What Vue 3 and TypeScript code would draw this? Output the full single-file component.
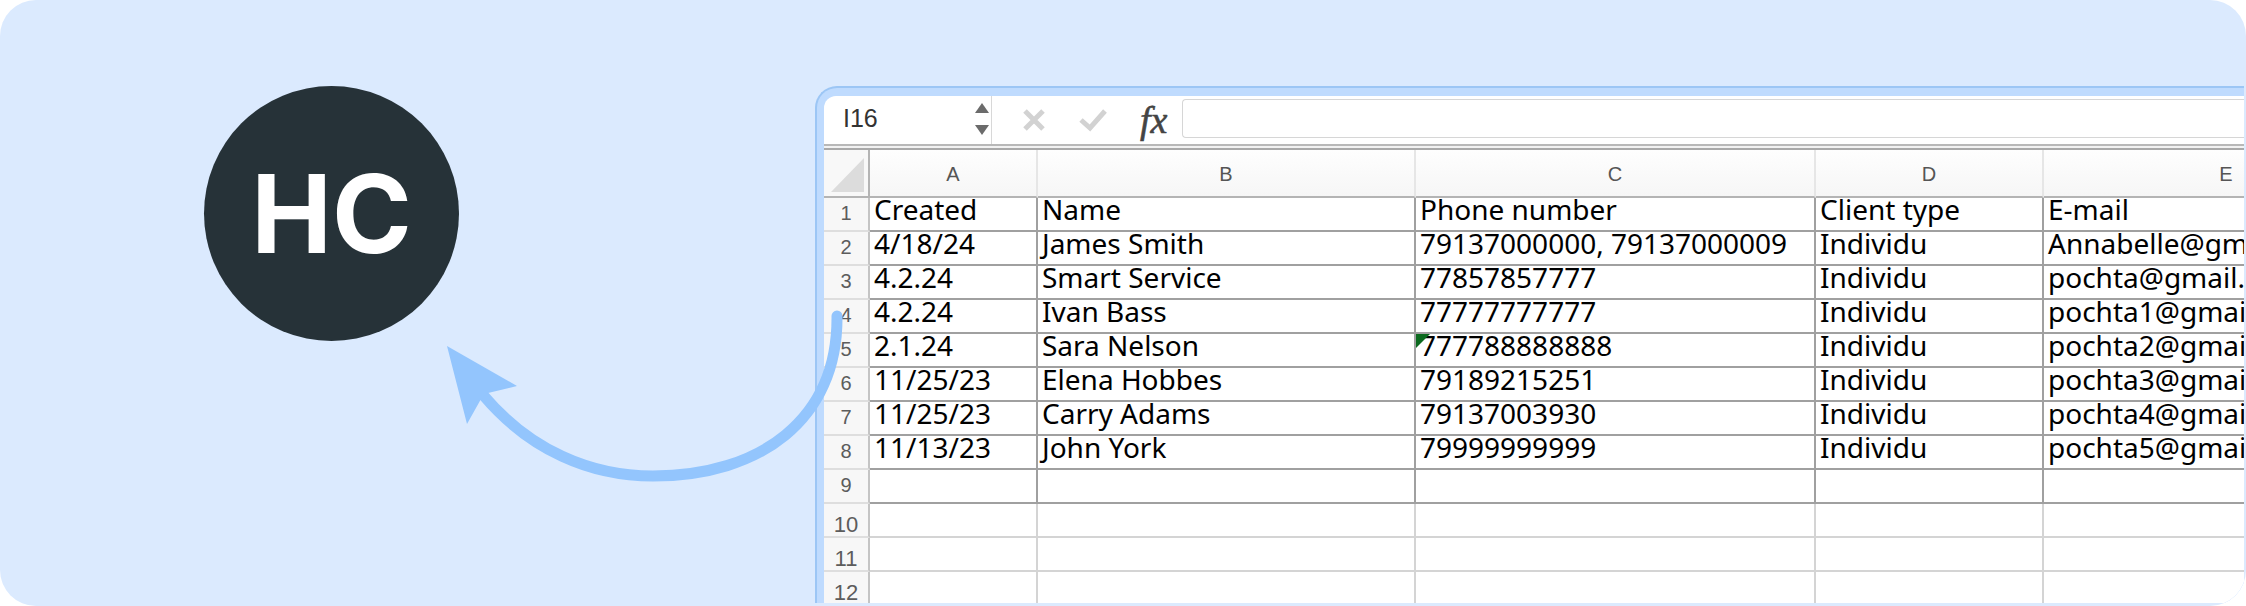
<script setup lang="ts">
const columns: string[] = ['A', 'B', 'C', 'D', 'E']
const rows: string[][] = [
  ['Created', 'Name', 'Phone number', 'Client type', 'E-mail'],
  ['4/18/24', 'James Smith', '79137000000, 79137000009', 'Individu', 'Annabelle@gmail.com'],
  ['4.2.24', 'Smart Service', '77857857777', 'Individu', 'pochta@gmail.com'],
  ['4.2.24', 'Ivan Bass', '77777777777', 'Individu', 'pochta1@gmail.com'],
  ['2.1.24', 'Sara Nelson', '777788888888', 'Individu', 'pochta2@gmail.com'],
  ['11/25/23', 'Elena Hobbes', '79189215251', 'Individu', 'pochta3@gmail.com'],
  ['11/25/23', 'Carry Adams', '79137003930', 'Individu', 'pochta4@gmail.com'],
  ['11/13/23', 'John York', '79999999999', 'Individu', 'pochta5@gmail.com'],
  ['', '', '', '', ''],
  ['', '', '', '', ''],
  ['', '', '', '', ''],
  ['', '', '', '', ''],
]
</script>

<template>
  <div class="card">
    <div class="logo"><span>HC</span></div>
    <div class="window">
      <div class="sheet">
        <div class="toolbar">
          <div class="namebox">
            <span class="cellref">I16</span>
            <div class="spinner"><i class="up"></i><i class="down"></i></div>
          </div>
          <svg class="tool-icon" width="24" height="24" viewBox="0 0 24 24">
            <path d="M3 3 L21 21 M21 3 L3 21" stroke="#d2d2d2" stroke-width="5" fill="none" />
          </svg>
          <svg class="tool-icon check" width="30" height="24" viewBox="0 0 30 24">
            <path d="M3 12 L12 20 L27 3" stroke="#d2d2d2" stroke-width="5" fill="none" />
          </svg>
          <span class="fx">fx</span>
          <div class="formula"></div>
        </div>
        <div class="rule"></div>
        <div class="grid">
          <div class="corner"><i></i></div>
          <div v-for="c in columns" :key="c" class="colhead">{{ c }}</div>
          <template v-for="(row, r) in rows" :key="r">
            <div class="rowhead" :class="{ wide: r >= 9 }">{{ r + 1 }}</div>
            <div
              v-for="(value, c) in row"
              :key="c"
              class="cell"
              :class="{ faint: r >= 9, flagged: r === 4 && c === 2 }"
            >{{ value }}</div>
          </template>
        </div>
      </div>
    </div>
    <svg class="arrow" width="2246" height="606" viewBox="0 0 2246 606">
      <path d="M837 316 C838 420 760 476 653 476 C590 476 530 450 484 396" fill="none" stroke="#93c5fd" stroke-width="11" stroke-linecap="round" />
      <path d="M447 346 L517 386 L488 393 L481 399 L467 424 Z" fill="#93c5fd" />
    </svg>
  </div>
</template>

<style>
html, body { margin: 0; background: #fff; }
</style>

<style scoped>
.card {
  position: relative;
  box-sizing: border-box;
  width: 2246px;
  height: 606px;
  padding: 86px 2px 3px 204px;
  display: flex;
  align-items: stretch;
  background: #dbeafe;
  border-radius: 36px;
  overflow: hidden;
}
.logo {
  flex: none;
  width: 255px;
  height: 255px;
  margin-right: 356px;
  border-radius: 50%;
  background: #263238;
  color: #fff;
  display: flex;
  align-items: center;
  justify-content: center;
  font: 700 108px/1 Inter, sans-serif;
}
.window {
  flex: 1;
  min-width: 0;
  box-sizing: border-box;
  border: 2px solid #9cc6f5;
  border-right: 0;
  border-bottom: 0;
  border-top-left-radius: 22px;
  padding: 8px 0 0 7px;
  background: #bfdbfe;
  overflow: hidden;
}
.sheet {
  height: 100%;
  background: #fff;
  border-top-left-radius: 12px;
  overflow: hidden;
}
.toolbar {
  height: 48px;
  display: flex;
  align-items: center;
}
.namebox {
  flex: none;
  box-sizing: border-box;
  width: 168px;
  height: 48px;
  padding: 0 1px 4px 19px;
  border-right: 1px solid #d8d8d8;
  display: flex;
  align-items: center;
  justify-content: space-between;
}
.cellref {
  font: 25px/1 "Liberation Sans", sans-serif;
  color: #333;
}
.spinner {
  display: flex;
  flex-direction: column;
  gap: 12px;
  padding: 2px 1px 0 0;
}
.spinner i {
  display: block;
  width: 0;
  height: 0;
  border-left: 7px solid transparent;
  border-right: 7px solid transparent;
}
.spinner .up { border-bottom: 10px solid #6b6b6b; }
.spinner .down { border-top: 10px solid #6b6b6b; }
.tool-icon {
  flex: none;
  margin-left: 30px;
}
.tool-icon.check {
  margin-left: 32px;
}
.fx {
  flex: none;
  margin-left: 32px;
  font: italic 400 38px/1 "Liberation Serif", serif;
  -webkit-text-stroke: 0.6px #444;
  color: #444;
}
.formula {
  flex: 1;
  height: 39px;
  margin: 0 0 3px 15px;
  box-sizing: border-box;
  border: 1px solid #d6d6d6;
  border-right: 0;
  border-radius: 4px 0 0 4px;
}
.rule {
  height: 2px;
  box-sizing: content-box;
  background: #b8b8b8;
  border-bottom: 2px solid #f2f2f2;
  box-shadow: 0 4px 0 #a9a9a9;
  margin-bottom: 2px;
}
.grid {
  display: grid;
  grid-template-columns: 46px 168px 378px 400px 228px 366px;
  grid-template-rows: 48px repeat(12, 34px);
}
.corner {
  box-sizing: border-box;
  border-right: 2px solid #b4b4b4;
  border-bottom: 2px solid #b4b4b4;
  padding: 8px 5px 0 7px;
  background: #f8f8f8;
}
.corner i {
  display: block;
  width: 33px;
  height: 34px;
  background: #dcdcdc;
  clip-path: polygon(100% 0, 100% 100%, 0 100%);
}
.colhead {
  box-sizing: border-box;
  border-right: 2px solid #e6e6e6;
  border-bottom: 2px solid #b4b4b4;
  background: linear-gradient(#fefefe, #f6f6f6);
  font: 20px/49px "Liberation Sans", sans-serif;
  text-align: center;
  color: #555;
}
.rowhead {
  box-sizing: border-box;
  border-right: 2px solid #c4c4c4;
  border-bottom: 2px solid #dedede;
  background: #f7f7f7;
  font: 20px/31px "Liberation Sans", sans-serif;
  text-align: center;
  color: #5c5c5c;
}
.rowhead.wide {
  font-size: 22px;
  line-height: 41px;
}
.cell {
  position: relative;
  box-sizing: border-box;
  min-width: 0;
  border-right: 2px solid #a0a0a0;
  border-bottom: 2px solid #a0a0a0;
  padding-left: 4px;
  font: 28px/22px "Noto Sans", sans-serif;
  color: #000;
  white-space: nowrap;
}
.cell.faint {
  border-color: #d4d4d4;
}
.cell.flagged::before {
  content: "";
  position: absolute;
  left: 0;
  top: 0;
  width: 14px;
  height: 14px;
  background: #0b6a1f;
  clip-path: polygon(0 0, 100% 0, 0 100%);
}
.arrow {
  position: absolute;
  left: 0;
  top: 0;
  pointer-events: none;
}
</style>
